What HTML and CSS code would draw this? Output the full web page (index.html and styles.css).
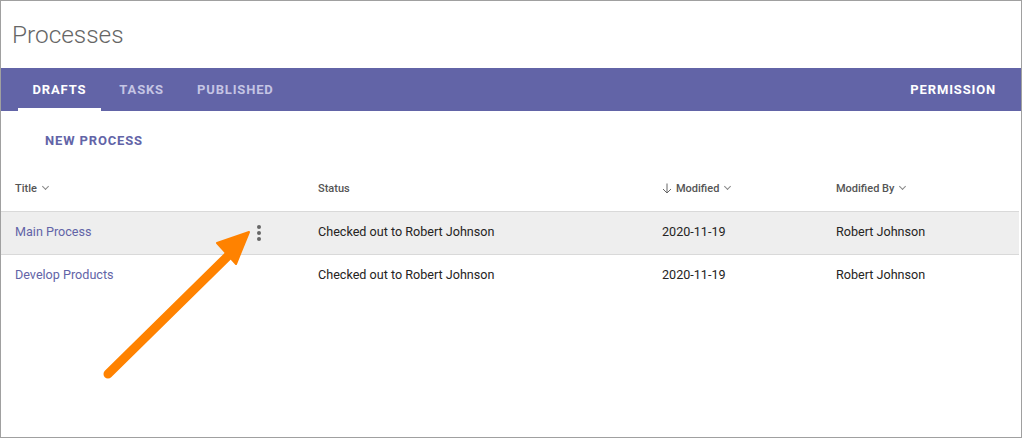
FILE: index.html
```html
<!DOCTYPE html>
<html>
<head>
<meta charset="utf-8">
<link rel="stylesheet" href="styles.css">
</head>
<body>
<div class="frame">
  <h1 class="page-title">Processes</h1>
  <nav class="tabbar">
    <div class="tabs">
      <span class="tab active">DRAFTS</span>
      <span class="tab">TASKS</span>
      <span class="tab">PUBLISHED</span>
    </div>
    <span class="tab perm">PERMISSION</span>
  </nav>
  <div class="toolbar">
    <span class="new-btn">NEW PROCESS</span>
  </div>
  <div class="table">
    <div class="row head">
      <div class="c c1">Title <span class="chev"></span></div>
      <div class="c c2">Status</div>
      <div class="c c3"><svg class="sort" width="10" height="11" viewBox="0 0 10 11"><path d="M5 0.5 V10 M1 6 L5 10 L9 6" fill="none" stroke="#666" stroke-width="1"/></svg>Modified <span class="chev"></span></div>
      <div class="c c4">Modified By <span class="chev"></span></div>
    </div>
    <div class="row body hl">
      <div class="c c1"><span class="link">Main Process</span><span class="kebab"><i></i><i></i><i></i></span></div>
      <div class="c c2">Checked out to Robert Johnson</div>
      <div class="c c3">2020-11-19</div>
      <div class="c c4">Robert Johnson</div>
    </div>
    <div class="row body">
      <div class="c c1"><span class="link">Develop Products</span></div>
      <div class="c c2">Checked out to Robert Johnson</div>
      <div class="c c3">2020-11-19</div>
      <div class="c c4">Robert Johnson</div>
    </div>
  </div>
  <svg class="arrow" width="1023" height="439" viewBox="0 0 1023 439">
    <line x1="108" y1="374" x2="233" y2="251" stroke="#ff8200" stroke-width="9" stroke-linecap="round"/>
    <polygon points="217,243 249,232 236,264" fill="#ff8200" stroke="#ff8200" stroke-width="2" stroke-linejoin="round"/>
  </svg>
</div>
</body>
</html>
```
FILE: styles.css
```css
* { box-sizing: border-box; }
html, body { margin: 0; padding: 0; background: #fff; }
body { font-family: Roboto, "Open Sans", Arial, sans-serif; }
.frame {
  position: relative;
  width: 1022px;
  height: 438px;
  border: 1px solid #a0a0a0;
  overflow: hidden;
}
.page-title {
  margin: 0;
  height: 67px;
  padding: 19px 0 0 11px;
  font-weight: 300;
  font-size: 24.4px;
  line-height: 30px;
  color: #666;
}
.tabbar {
  height: 43px;
  background: #6264a7;
  display: flex;
  justify-content: space-between;
  align-items: stretch;
}
.tabs { display: flex; gap: 4px; padding-left: 17px; }
.tab {
  display: flex;
  align-items: center;
  padding: 3px 14.5px 0;
  font-size: 13px;
  font-weight: 700;
  letter-spacing: 0.85px;
  color: #c5c5e4;
  border-bottom: 3px solid transparent;
}
.tab.active { color: #fff; border-bottom-color: #fff; }
.tab.perm { color: #fff; padding-right: 25px; }
.toolbar {
  height: 58px;
  padding-left: 44px;
  display: flex;
  align-items: center;
}
.new-btn {
  font-size: 13px;
  font-weight: 700;
  letter-spacing: 0.85px;
  color: #6264a7;
}
.table { width: 1018px; }
.row { display: flex; align-items: center; }
.row.head {
  height: 42px;
  padding-bottom: 4px;
  font-size: 11px;
  font-weight: 500;
  color: #555;
}
.row.body {
  height: 43px;
  padding-bottom: 3px;
  border-top: 1px solid #d9d9d9;
  font-size: 12.6px;
  color: #252423;
}
.row.hl { background: #eeeeee; }
.c { display: flex; align-items: center; }
.c1 { width: 317px; padding-left: 14px; }
.c2 { width: 344px; }
.c3 { width: 174px; }
.c4 { flex: 1; }
.link { color: #6264a7; }
.chev {
  display: inline-block;
  width: 5px;
  height: 5px;
  border-right: 1px solid #888;
  border-bottom: 1px solid #888;
  transform: rotate(45deg);
  margin-left: 6px;
  margin-top: -3px;
}
.sort { margin-right: 4px; }
.kebab {
  display: flex;
  flex-direction: column;
  gap: 2px;
  margin-left: auto;
  margin-right: 57px;
  margin-top: 3px;
}
.kebab i {
  display: block;
  width: 4px;
  height: 4px;
  border-radius: 50%;
  background: #666;
}
.arrow { position: absolute; left: -1px; top: -1px; pointer-events: none; }
```
